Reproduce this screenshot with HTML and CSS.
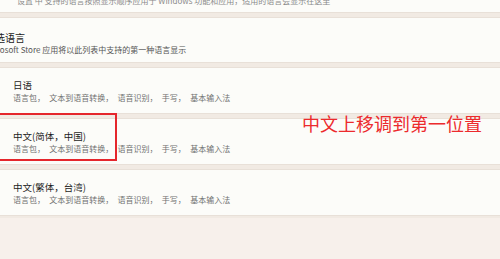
FILE: index.html
```html
<!DOCTYPE html>
<html lang="zh-CN">
<head>
  <meta charset="UTF-8" />
  <meta name="viewport" content="width=device-width, initial-scale=1.0"/>
  <title>语言设置</title>
  <link rel="stylesheet" href="styles.css">
</head>
<body>
  <div class="page">
    <div class="top-card">
      <p class="top-note">设置 中 支持的语言按照显示顺序应用于 Windows 功能和应用，适用的语言会显示在这里</p>
    </div>

    <div class="pref-header">
      <h2>首选语言</h2>
      <p>Microsoft Store 应用将以此列表中支持的第一种语言显示</p>
    </div>

    <div class="lang-list">
      <div class="lang-card">
        <h3>日语</h3>
        <p>语言包， 文本到语音转换， 语音识别， 手写， 基本输入法</p>
      </div>
      <div class="lang-card">
        <h3>中文(简体，中国)</h3>
        <p>语言包， 文本到语音转换， 语音识别， 手写， 基本输入法</p>
      </div>
      <div class="lang-card">
        <h3>中文(繁体，台湾)</h3>
        <p>语言包， 文本到语音转换， 语音识别， 手写， 基本输入法</p>
      </div>

      <div class="mark-box"></div>
      <div class="mark-note">中文上移调到第一位置</div>
    </div>
  </div>
</body>
</html>
```

FILE: styles.css
```css
:root {
  --card-bg: #fcfcf9;
  --gap-bg: #f1eae3;
  --line: #e8e0d8;
  --text: #1c1c1c;
  --muted: #707070;
  --mark: #e5262c;
}

body {
  margin: 0;
  background-color: #f7f0eb;
  font-family: "Noto Sans CJK SC", "Noto Sans", sans-serif;
  color: var(--text);
  overflow: hidden;
}

.page {
  display: flex;
  flex-direction: column;
  gap: 4px;
  background: var(--gap-bg);
  margin: 0 -20px;
  padding-bottom: 2px;
}

.top-card {
  height: 13px;
  background: var(--card-bg);
  border-bottom: 1px solid var(--line);
  box-sizing: border-box;
  overflow: hidden;
}

.top-note {
  margin: -4px 0 0 37px;
  font-size: 8px;
  line-height: 10px;
  color: #8a8a8a;
  white-space: nowrap;
}

.pref-header {
  height: 46px;
  background: var(--card-bg);
  border-top: 1px solid var(--line);
  border-bottom: 1px solid var(--line);
  box-sizing: border-box;
  padding: 13px 0 0 6px;
}

.pref-header h2 {
  margin: 0 0 0 -1px;
  font-size: 10px;
  font-weight: normal;
  line-height: 13px;
}

.pref-header p {
  margin: 0 0 0 -2px;
  font-size: 8px;
  line-height: 11px;
  color: #555;
  white-space: nowrap;
}

.lang-list {
  position: relative;
  display: flex;
  flex-direction: column;
  gap: 4px;
}

.lang-card {
  height: 47px;
  background: var(--card-bg);
  border-top: 1px solid var(--line);
  border-bottom: 1px solid var(--line);
  box-sizing: border-box;
  padding: 11px 0 0 33px;
}

.lang-card h3 {
  margin: 0;
  font-size: 9.5px;
  font-weight: normal;
  line-height: 12px;
}

.lang-card p {
  margin: 0;
  font-size: 8px;
  line-height: 13px;
  color: var(--muted);
  white-space: nowrap;
  word-spacing: 2.5px;
}

.mark-box {
  position: absolute;
  left: 14px;
  top: 46px;
  width: 123px;
  height: 48px;
  border: 2px solid var(--mark);
  box-sizing: border-box;
}

.mark-note {
  position: absolute;
  left: 322px;
  top: 44px;
  font-size: 18px;
  line-height: 24px;
  color: #ec2b2d;
  white-space: nowrap;
}
```
